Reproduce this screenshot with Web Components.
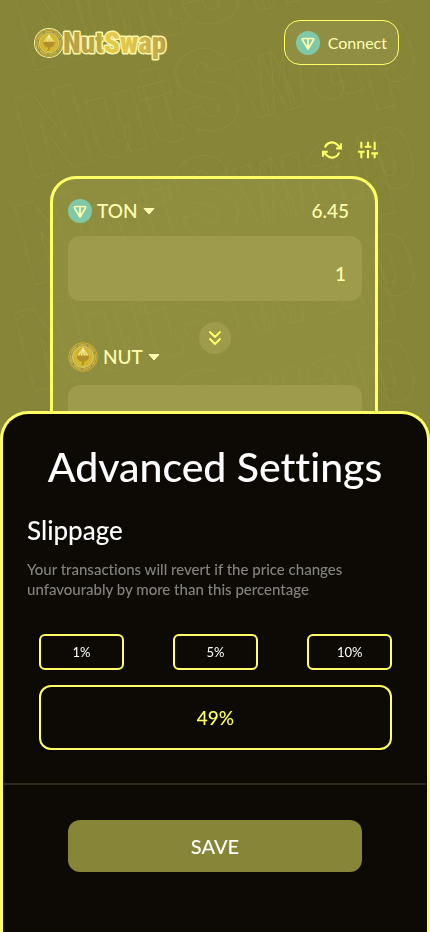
<!DOCTYPE html>
<html lang="en">
<head>
<meta charset="utf-8">
<meta name="viewport" content="width=device-width, initial-scale=1">
<title>NutSwap</title>
<style>
  :root {
    --accent: #ffff66;
    --cream: #ffffb0;
    --olive: #868538;
    --card: #908e42;
    --field: #9e9b4b;
    --ink: #0d0a05;
    --medium: "Lato Medium", Lato, sans-serif;
    --display: Impact, "Roboto Condensed", "Open Sans Condensed", "Noto Sans Condensed", Roboto, sans-serif;
  }
  html, body { height: 100%; }
  body {
    margin: 0;
    background: var(--olive);
    color: var(--cream);
    font-family: Lato, "Open Sans", sans-serif;
    overflow: hidden;
  }
</style>
</head>
<body>
<nut-app></nut-app>

<script>
const define = (name, html, setup) => {
  const template = document.createElement('template');
  template.innerHTML = html;
  customElements.define(name, class extends HTMLElement {
    constructor() {
      super();
      this.attachShadow({ mode: 'open' }).append(template.content.cloneNode(true));
    }
    connectedCallback() { if (setup) setup(this, this.shadowRoot); }
  });
};

define('ton-icon', `
  <style>:host{display:block;width:24px;height:24px;flex:none}svg{display:block}</style>
  <svg width="24" height="24" viewBox="0 0 24 24" fill="none" aria-hidden="true">
    <circle cx="12" cy="12" r="12" fill="#7fc9a9"/>
    <path d="M7.4 7.5h9.2c.9 0 1.300.8.9 1.500L12 18 6.500 9c-.4-.7 0-1.500.9-1.500zM12 7.500V17.500" stroke="#ffffb0" stroke-width="1.700" stroke-linejoin="round"/>
  </svg>`);

define('nut-coin', `
  <style>:host{display:block;width:30px;height:30px;flex:none}svg{display:block;width:100%;height:100%}</style>
  <svg viewBox="0 0 30 30" fill="none" aria-hidden="true">
    <circle cx="15" cy="15" r="14.300" fill="#98933f" stroke="#d0ae31" stroke-width="1"/>
    <circle cx="15" cy="15" r="12.300" stroke="#c9b14a" stroke-width="1.400" stroke-dasharray="9 1.500"/>
    <circle cx="15" cy="15" r="10.500" fill="#d2b62f" stroke="#e8d573" stroke-width=".8"/>
    <path d="M15 6.500c-2 2-4.500 4.500-5 7.200h10c-.5-2.700-3-5.200-5-7.200z" fill="#dcc24b"/>
    <path d="M15 6.500l-4.800 7M15 6.500l-1.600 7M15 6.500l1.600 7M15 6.500l4.800 7" stroke="#f6f0a2" stroke-width="1"/>
    <path d="M9 13.800h12c.2 3.400-1.900 5.600-5 5.800v1.400c0 1.300-1 2.200-3 2 .9-.6 1.300-1.300 1.200-3.400-3.200-.2-5.400-2.400-5.200-5.800z" fill="#b08f2c"/>
  </svg>`);

define('nut-logo', `
  <style>
    :host{display:block}
    a{display:flex;align-items:center}
    nut-coin{width:28px;height:28px;border-radius:50%;box-shadow:0 0 0 1px #f7f3a4}
    svg{display:block;overflow:visible}
    text{font:900 29px var(--display)}
  </style>
  <a href="#" aria-label="NutSwap home">
    <nut-coin></nut-coin>
    <svg width="104" height="32" viewBox="0 0 104 32" aria-hidden="true">
      <defs><linearGradient id="g"><stop offset="0" stop-color="#b5a145"/><stop offset=".36" stop-color="#b9a544"/><stop offset=".4" stop-color="#e6cb45"/><stop offset=".65" stop-color="#e0c64c"/><stop offset="1" stop-color="#b9a14b"/></linearGradient></defs>
      <text x="0" y="26" fill="url(#g)" stroke="#faf6a8" stroke-width="3" stroke-linejoin="round" paint-order="stroke">NutSwap</text>
    </svg>
  </a>`);

define('nut-backdrop', `
  <style>
    :host{position:absolute;inset:0;overflow:hidden;z-index:-1}
    svg{display:block;overflow:visible}
    text{font:900 114px var(--display);fill:none;stroke:#98963d;stroke-opacity:.5;stroke-width:1}
  </style>
  <svg width="430" height="932" aria-hidden="true"></svg>`,
  (host, root) => {
    const svg = root.querySelector('svg');
    for (let row = 0; row < 6; row++) {
      const t = document.createElementNS('http://www.w3.org/2000/svg', 'text');
      t.textContent = 'NutSwap';
      t.setAttribute('transform', `translate(30 ${72 + row * 107}) rotate(-15)`);
      svg.append(t);
    }
  });

define('connect-button', `
  <style>
    button{display:flex;align-items:center;gap:8px;height:45px;padding:0 11px;border:1px solid var(--accent);border-radius:16px;background:var(--card);color:var(--cream);font:400 16px Lato,sans-serif}
  </style>
  <button type="button"><ton-icon></ton-icon><slot></slot></button>`);

define('tool-bar', `
  <style>
    :host{display:flex;justify-content:flex-end;gap:16px}
    button{display:block;padding:0;border:0;background:none;color:var(--accent)}
    svg{display:block}
  </style>
  <button type="button" aria-label="Refresh"><svg width="20" height="20" viewBox="0 0 24 24" fill="none" stroke="currentColor" stroke-width="2.500"><path d="M23 4v6h-6M1 20v-6h6"/><path d="M3.500 9a9 9 0 0 1 14.900-3.400L23 10M1 14l4.600 4.400A9 9 0 0 0 20.500 15"/></svg></button>
  <button type="button" aria-label="Settings"><svg width="20" height="20" viewBox="0 0 24 24" fill="none" stroke="currentColor" stroke-width="2.500"><path d="M4 22v-8M4 10V2M12 22V12M12 8V2M20 22v-6M20 12V2M0 14h8M8 8h8M16 16h8"/></svg></button>`);

define('token-row', `
  <style>
    :host{display:flex;align-items:center;justify-content:space-between;font:500 19px/24px var(--medium)}
    button{display:flex;align-items:center;gap:5px;padding:0;border:0;background:none;color:inherit;font:inherit}
    .amount{padding-right:13px}
  </style>
  <button type="button"><slot name="icon"></slot><slot></slot>
    <svg width="12" height="7" viewBox="0 0 12 7" aria-hidden="true"><path d="M1 .5h10L6 6z" fill="currentColor" stroke="currentColor" stroke-linejoin="round"/></svg>
  </button>
  <span class="amount"><slot name="amount"></slot></span>`);

define('amount-field', `
  <style>
    input{display:block;box-sizing:border-box;width:100%;height:65px;padding:10px 16px 0;border:0;border-radius:12px;background:var(--field);color:var(--cream);font:500 19px var(--medium);text-align:right}
  </style>
  <input type="text" inputmode="decimal">`,
  (host, root) => {
    const input = root.querySelector('input');
    input.value = host.getAttribute('value') || '';
    input.setAttribute('aria-label', host.getAttribute('label'));
  });

define('swap-card', `
  <style>
    :host{display:flex;flex-direction:column;gap:13px;border:3px solid var(--accent);border-radius:26px;padding:20px 13px 30px 15px;background:color-mix(in srgb,var(--field) 40%,transparent)}
    button{align-self:center;width:32px;height:32px;margin:8px 0 -25px;padding:0;border:0;border-radius:50%;background:var(--field);color:var(--accent);display:grid;place-items:center}
  </style>
  <slot name="from"></slot>
  <button type="button" aria-label="Switch tokens"><svg width="14" height="16" viewBox="0 0 14 16" fill="none" stroke="currentColor" stroke-width="2" stroke-linecap="round" stroke-linejoin="round"><path d="M2 2l5 5 5-5M2 9l5 5 5-5"/></svg></button>
  <slot name="to"></slot>`);

define('preset-list', `
  <style>
    :host{display:flex;justify-content:space-between}
    button{height:36px;width:24%;padding:0;border:2px solid var(--accent);border-radius:6px;background:none;color:#fff;font:400 13px Lato,sans-serif}
  </style>
  <button type="button">1%</button><button type="button">5%</button><button type="button">10%</button>`);

define('settings-sheet', `
  <style>
    :host{position:fixed;inset:411px 0 0;box-sizing:border-box;overflow:auto;border:3px solid var(--accent);border-bottom:0;border-radius:28px 28px 0 0;background:var(--ink);color:#fff}
    h1{margin:28px 0 0;font:500 41px/50px var(--medium);text-align:center}
    section{padding:24px 23px 0 24px}
    h2{margin:0;font:500 26px/28px var(--medium)}
    p{margin:15px 0 0;max-width:330px;color:#85837f;font:500 15px/20px var(--medium)}
    h1,p{font-variant-ligatures:none}
    .choices{display:grid;gap:15px;padding:35px 12px 0}
    input{box-sizing:border-box;width:100%;height:65px;padding:0;border:2px solid var(--accent);border-radius:12px;background:none;color:var(--accent);font:500 19px var(--medium);text-align:center}
    hr{height:2px;margin:33px 1px 35px;border:0;background:#2f281c}
    .save{display:block;width:calc(100% - 130px);height:52px;margin:0 auto;border:0;border-radius:12px;background:var(--olive);color:#fff;font:500 20px var(--medium)}
  </style>
  <h1>Advanced Settings</h1>
  <section>
    <h2 id="slippage">Slippage</h2>
    <p>Your transactions will revert if the price changes unfavourably by more than this percentage</p>
    <div class="choices">
      <preset-list></preset-list>
      <input type="text" value="49%" aria-labelledby="slippage">
    </div>
  </section>
  <hr>
  <button class="save" type="button">SAVE</button>`);

define('nut-app', `
  <style>
    :host{display:block;position:relative;z-index:0;height:100%;overflow:hidden}
    header{display:flex;align-items:center;justify-content:space-between;padding:20px 31px 0 35px}
    main{padding:75px 52px 0 50px}
    swap-card{margin-top:16px}
  </style>
  <nut-backdrop></nut-backdrop>
  <header><nut-logo></nut-logo><connect-button>Connect</connect-button></header>
  <main>
    <tool-bar></tool-bar>
    <swap-card>
      <token-row slot="from"><ton-icon slot="icon"></ton-icon>TON<span slot="amount">6.45</span></token-row>
      <amount-field slot="from" value="1" label="TON amount"></amount-field>
      <token-row slot="to"><nut-coin slot="icon"></nut-coin>NUT</token-row>
      <amount-field slot="to" label="NUT amount"></amount-field>
    </swap-card>
  </main>
  <settings-sheet role="dialog" aria-label="Advanced Settings"></settings-sheet>`);
</script>
</body>
</html>
